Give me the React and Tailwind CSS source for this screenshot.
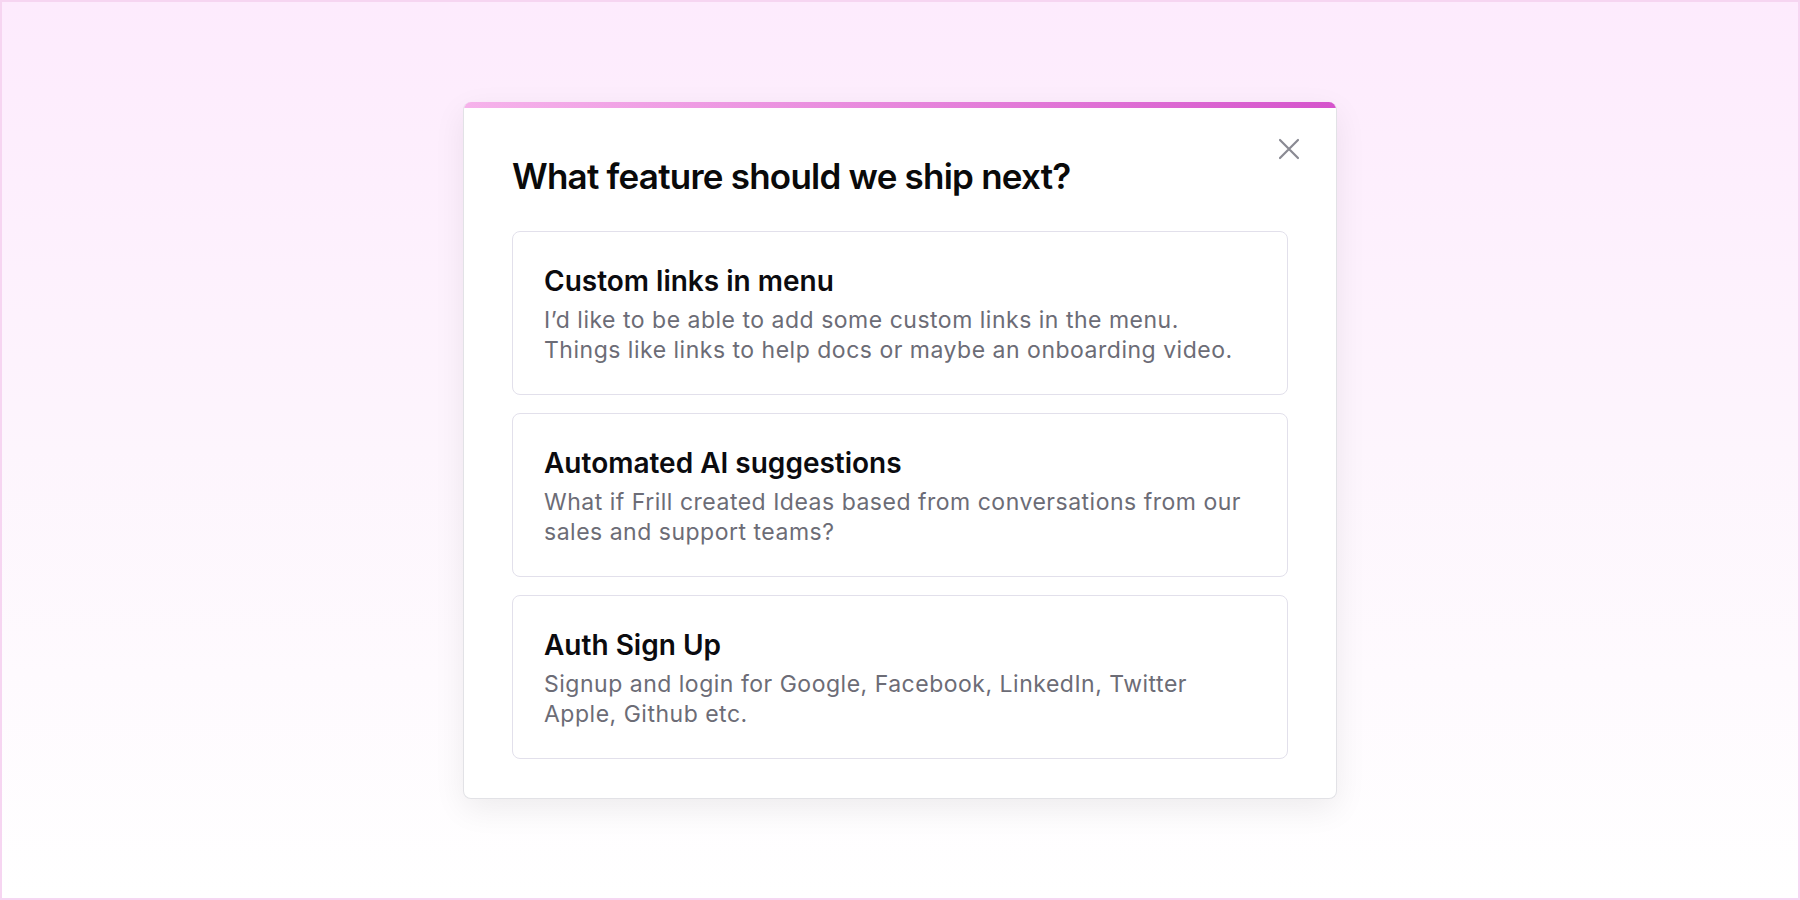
const IDEAS = [
  {
    title: 'Custom links in menu',
    body: 'I’d like to be able to add some custom links in the menu. Things like links to help docs or maybe an onboarding video.',
  },
  {
    title: 'Automated AI suggestions',
    body: 'What if Frill created Ideas based from conversations from our sales and support teams?',
  },
  {
    title: 'Auth Sign Up',
    body: 'Signup and login for Google, Facebook, LinkedIn, Twitter Apple, Github etc.',
  },
]

function IdeaCard({ title, body }) {
  return (
    <div className="h-[164px] rounded-lg border border-[#e2e0eb] bg-white pl-[31px] pr-6 pt-[33px]">
      <h3 className="text-[28px] leading-[32px] font-semibold text-[#0b0b0f]">{title}</h3>
      <p className="mt-[8px] max-w-[706px] text-[23px] leading-[30px] tracking-[0.022em] text-[#6c6c76]">{body}</p>
    </div>
  )
}

export default function App() {
  return (
    <div
      className="h-screen w-full border-2 border-[#f6d5f1] bg-gradient-to-b from-[#fdebfd] via-[#fdf5fd] to-white flex justify-center pt-[100px]"
      style={{ fontFamily: 'Inter, "Noto Sans", sans-serif' }}
    >
      <div className="relative w-[874px] h-[697px] rounded-lg overflow-hidden bg-white border-x border-b border-[#e2e2e6] shadow-[0_10px_32px_rgba(0,0,0,0.07)]">
        {/* accent bar */}
        <div className="h-[6px] bg-gradient-to-r from-[#f6b3eb] to-[#d553cc]" />

        <button className="absolute top-[34px] right-[34px] p-0.5 text-[#8a8a93]" aria-label="Close">
          <svg width="22" height="22" viewBox="0 0 22 22" fill="none" stroke="currentColor" strokeWidth="2.2" strokeLinecap="round">
            <path d="M2 2L20 20M20 2L2 20" />
          </svg>
        </button>

        <div className="px-12 pt-[46px] pb-[39px]">
          <h2 className="text-[35px] leading-[44px] font-semibold tracking-[-0.022em] text-[#0a0a0a]">
            What feature should we ship next?
          </h2>

          <div className="mt-[33px] flex flex-col gap-[18px]">
            {IDEAS.map(idea => (
              <IdeaCard key={idea.title} {...idea} />
            ))}
          </div>
        </div>
      </div>
    </div>
  )
}
